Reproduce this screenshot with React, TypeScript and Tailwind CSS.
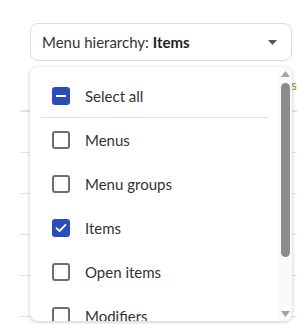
import React from "react";

interface Option {
  label: string;
  checked: boolean;
}

const options: Option[] = [
  { label: "Menus", checked: false },
  { label: "Menu groups", checked: false },
  { label: "Items", checked: true },
  { label: "Open items", checked: false },
  { label: "Modifiers", checked: false },
];

function Box({ checked, partial }: { checked?: boolean; partial?: boolean }) {
  if (partial) {
    return (
      <span className="w-[18px] h-[18px] rounded-[3px] bg-[#2b4cbc] flex items-center justify-center shrink-0">
        <span className="w-[10px] h-[2px] bg-white" />
      </span>
    );
  }
  if (checked) {
    return (
      <span className="w-[18px] h-[18px] rounded-[3px] bg-[#2b4cbc] flex items-center justify-center shrink-0">
        <svg width="12" height="10" viewBox="0 0 12 10" fill="none">
          <path d="M1.5 5.2 4.5 8 10.5 1.8" stroke="white" strokeWidth="1.8" strokeLinecap="round" strokeLinejoin="round" />
        </svg>
      </span>
    );
  }
  return <span className="w-[18px] h-[18px] rounded-[3px] border-2 border-[#6e6e6e] bg-white shrink-0" />;
}

export default function App() {
  return (
    <div className="relative w-[297px] h-[324px] overflow-hidden bg-white text-[#333] font-['Lato',sans-serif]">
      {/* trigger */}
      <div className="pt-[23px] pl-[30px]">
        <button className="w-[262px] h-[38px] flex items-center justify-between pl-[11px] pr-[14px] border border-[#dcdcdc] rounded-lg bg-white text-[15px]">
          <span>
            Menu hierarchy: <span className="font-bold text-[#222]">Items</span>
          </span>
          <svg width="9" height="5" viewBox="0 0 9 5">
            <path d="M0 0h9L4.5 5z" fill="#555" />
          </svg>
        </button>
      </div>

      {/* table behind */}
      <div className="flex">
        <div className="w-[20px]" />
        <div className="flex-1">
          <div className="h-[51px] border-b-2 border-[#e3e3e3] flex items-center justify-end text-[13px] text-[#b08a2c]">s</div>
          {[0, 1, 2, 3, 4].map((i) => (
            <div key={i} className="h-[41px] border-b border-[#e3e3e3]" />
          ))}
        </div>
      </div>

      {/* dropdown panel */}
      <div className="absolute left-[30px] top-[67px] w-[262px] h-[254px] bg-white rounded-lg shadow-[0_1px_4px_rgba(0,0,0,0.22)] flex overflow-hidden">
        <div className="flex-1 pt-[8px] text-[15px] text-[#333]">
          <div className="h-[42px] flex items-center pl-[22px] gap-[15px]">
            <Box partial />
            <span>Select all</span>
          </div>
          <div className="mx-[11px] h-px bg-[#dedede]" />
          {options.map((o) => (
            <div key={o.label} className="h-[44px] flex items-center pl-[22px] gap-[15px]">
              <Box checked={o.checked} />
              <span>{o.label}</span>
            </div>
          ))}
        </div>
        {/* scrollbar */}
        <div className="w-[13px] bg-[#fafafa] flex flex-col items-center pt-[4px] pb-[4px]">
          <svg width="9" height="6" viewBox="0 0 9 6">
            <path d="M4.5 0 9 6H0z" fill="#a3a3a3" />
          </svg>
          <div className="mt-[6px] w-[9px] h-[174px] rounded-full bg-[#8c8c8c]" />
          <div className="flex-1" />
          <svg width="9" height="6" viewBox="0 0 9 6">
            <path d="M0 0h9L4.5 6z" fill="#a3a3a3" />
          </svg>
        </div>
      </div>
    </div>
  );
}
